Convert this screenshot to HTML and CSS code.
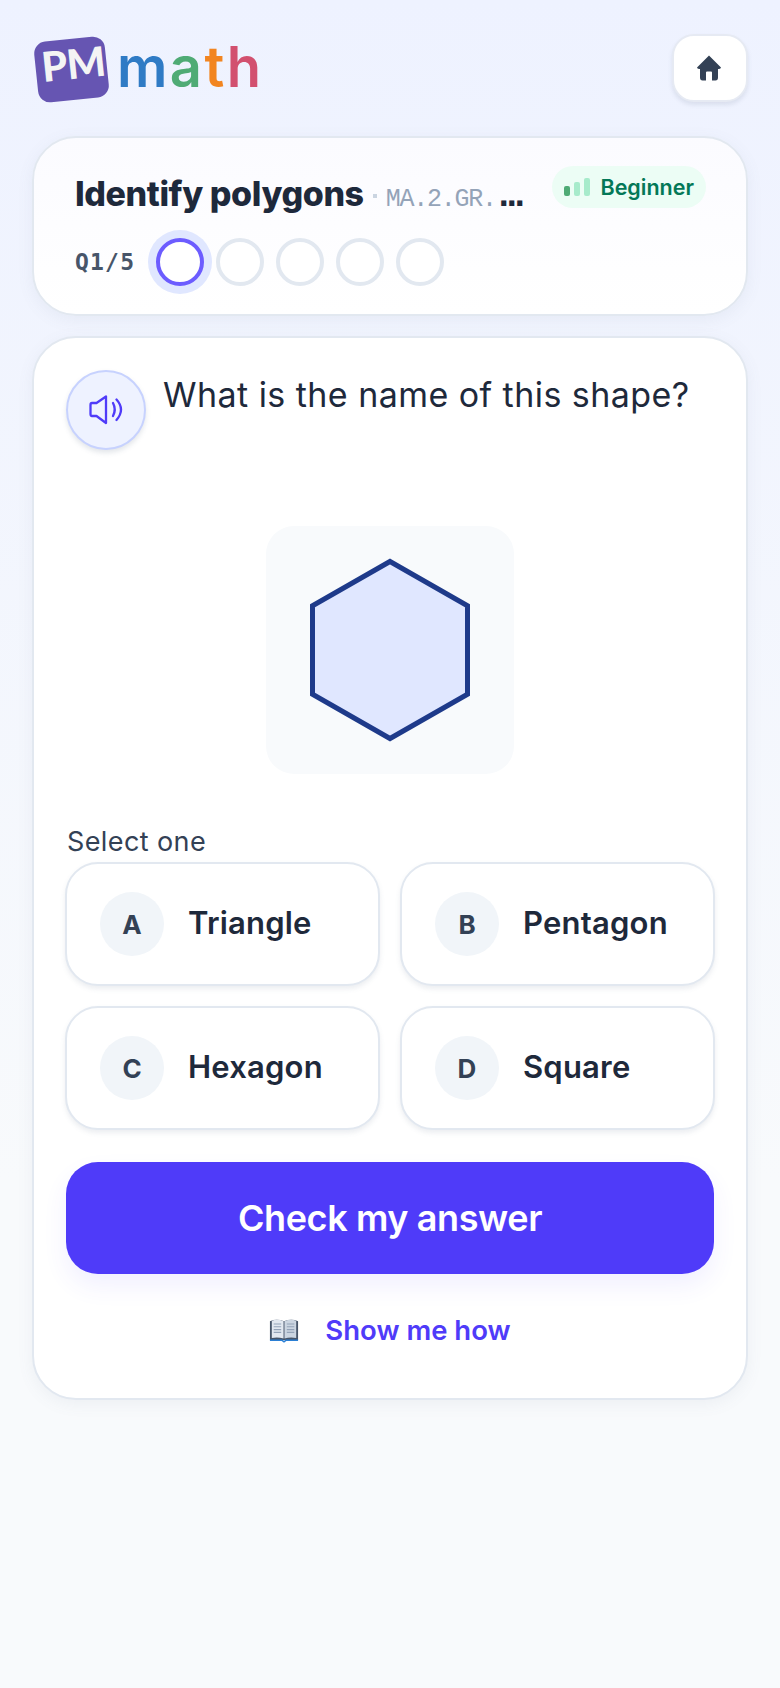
FILE: index.html
```html
<!DOCTYPE html>
<html lang="en">
<head>
    <meta charset="UTF-8">
    <meta name="viewport" content="width=device-width, initial-scale=1.0">
    <title>PM math</title>
    <link rel="stylesheet" href="styles.css">
</head>
<body>

    <!-- Header -->
    <div class="topbar">
        <div class="logo">
            <div class="logo-badge"><span>PM</span></div>
            <div class="logo-word"><span class="c-m">m</span><span class="c-a">a</span><span class="c-t">t</span><span class="c-h">h</span></div>
        </div>
        <button class="home-btn" aria-label="Home">
            <svg width="24" height="26" viewBox="0 0 24 26"><path d="M12 0.5 L24 12.6 Q23.8 14 22 14 H21 V22.5 Q21 25.5 18.5 25.5 H15 V17.5 Q15 16.5 14 16.5 H10 Q9 16.5 9 17.5 V25.5 H5.5 Q3 25.5 3 22.5 V14 H2 Q0.2 14 0 12.6 Z" fill="#334155"/></svg>
        </button>
    </div>

    <!-- Progress card -->
    <div class="card progress-card">
        <div class="title-row">
            <div class="title-line">
                <span class="title">Identify polygons</span>
                <span class="dot"></span>
                <span class="code">MA.2.GR.</span><span class="dots">...</span>
            </div>
            <div class="level">
                <span class="bars"><i></i><i></i><i></i></span>
                Beginner
            </div>
        </div>
        <div class="steps">
            <span class="step-label">Q1/5</span>
            <span class="step current"></span>
            <span class="step"></span>
            <span class="step"></span>
            <span class="step"></span>
            <span class="step"></span>
        </div>
    </div>

    <!-- Question card -->
    <div class="card question-card">
        <div class="question">
            <button class="speak-btn" aria-label="Read aloud">
                <svg width="34" height="30" viewBox="0 0 34 30" fill="none" stroke="#4f3bf9" stroke-width="2.3" stroke-linecap="round" stroke-linejoin="round">
                    <path d="M3 8 H7.5 L17 1.5 V28 L7.5 21 H3 Q1.5 21 1.5 19 V10 Q1.5 8 3 8 Z"/>
                    <path d="M24 8 Q27.5 14.5 24 21"/>
                    <path d="M27.5 4.5 Q36.5 14.5 27.5 25"/>
                </svg>
            </button>
            <p class="question-text">What is the name of this shape?</p>
        </div>

        <div class="shape-box">
            <svg width="160" height="184" viewBox="0 0 160 184">
                <polygon points="80,3.5 157.5,47.75 157.5,136.25 80,180.5 2.5,136.25 2.5,47.75" fill="#e0e7ff" stroke="#1e3a8a" stroke-width="5"/>
            </svg>
        </div>

        <div class="select-label">Select one</div>
        <div class="options">
            <div class="option"><span class="letter">A</span><span class="option-name">Triangle</span></div>
            <div class="option"><span class="letter">B</span><span class="option-name">Pentagon</span></div>
            <div class="option"><span class="letter">C</span><span class="option-name">Hexagon</span></div>
            <div class="option"><span class="letter">D</span><span class="option-name">Square</span></div>
        </div>

        <button class="check-btn">Check my answer</button>

        <div class="show-how">
            <svg width="30" height="25" viewBox="0 0 32 26">
                <path d="M1 3 Q8 0 16 3 Q24 0 31 3 V23 H1 Z" fill="#475569"/>
                <path d="M3 2.5 Q9 0.5 15.5 3 V21.5 Q9 19.5 3 21 Z" fill="#e2e8f0"/>
                <path d="M29 2.5 Q23 0.5 16.5 3 V21.5 Q23 19.5 29 21 Z" fill="#cbd5e1"/>
                <path d="M5 6 H13 M5 9 H13 M5 12 H13 M5 15 H13 M19 6 H27 M19 9 H27 M19 12 H27 M19 15 H27" stroke="#94a3b8" stroke-width="1.2"/>
                <path d="M1 23.5 H14 L16 25 L18 23.5 H31" fill="none" stroke="#2b7fd4" stroke-width="1.6"/>
            </svg>
            <a class="show-link" href="#">Show me how</a>
        </div>
    </div>

</body>
</html>
```

FILE: styles.css
```css
* {
    box-sizing: border-box;
}

body {
    font-family: 'Inter', 'Liberation Sans', sans-serif;
    margin: 0;
    padding: 36px 32px 0 32px;
    min-height: 1688px;
    background: linear-gradient(180deg, #eef2ff 0%, #f8fafc 70%);
    color: #1e293b;
}

button {
    font-family: inherit;
    cursor: pointer;
}

/* Header */
.topbar {
    display: flex;
    justify-content: space-between;
    align-items: flex-start;
    height: 100px;
}

.logo {
    display: flex;
    align-items: center;
    gap: 10px;
    height: 66px;
}

.logo-badge {
    width: 71px;
    height: 61px;
    margin-left: 4px;
    background-color: #6655b2;
    border-radius: 12px;
    transform: rotate(-6deg);
    padding: 0 0 0 6px;
    line-height: 50px;
}

.logo-badge span {
    color: #f4f4f4;
    font-family: 'Lato', sans-serif;
    font-size: 41px;
    font-weight: 900;
    letter-spacing: -0.5px;
}

.logo-word {
    font-size: 56px;
    font-weight: 600;
    letter-spacing: 2.4px;
    line-height: 1;
    margin-top: -5px;
}

.c-m { color: #2f7bc5; }
.c-a { color: #4fab75; }
.c-t { color: #f28520; }
.c-h { color: #d2506f; }

.home-btn {
    width: 76px;
    height: 68px;
    border: 2px solid #e6eaf3;
    margin-top: -2px;
    border-radius: 22px;
    background-color: #ffffff;
    box-shadow: 0 3px 4px rgba(100, 116, 139, 0.15);
    display: flex;
    align-items: center;
    justify-content: center;
    padding: 0 3px 0 0;
}

/* Cards */
.card {
    width: 716px;
    border: 2px solid #e2e8f0;
    border-radius: 44px;
    background-color: #ffffff;
    box-shadow: 0 4px 16px rgba(100, 116, 139, 0.08);
}

/* Progress card */
.progress-card {
    height: 180px;
    padding: 28px 41px 0 41px;
    background: linear-gradient(180deg, #fbfbff 0%, #ffffff 100%);
    margin-bottom: 20px;
}

.title-row {
    display: flex;
    justify-content: space-between;
    align-items: flex-start;
}

.title-line {
    display: flex;
    align-items: baseline;
    padding-top: 7px;
}

.title {
    font-size: 34px;
    font-weight: 800;
    letter-spacing: -0.4px;
    color: #1e293b;
}

.dot {
    width: 4px;
    height: 4px;
    margin: 0 9px 0 9px;
    background-color: #cbd5e1;
    position: relative;
    top: -8px;
}

.code {
    font-family: 'Liberation Mono', monospace;
    font-size: 25px;
    color: #94a3b8;
    letter-spacing: -1.25px;
}

.dots {
    font-family: 'Liberation Sans', sans-serif;
    font-size: 36px;
    font-weight: 700;
    line-height: 1;
    letter-spacing: -2px;
    color: #1e293b;
    margin-left: 3px;
}

.level {
    display: flex;
    align-items: center;
    gap: 10px;
    height: 42px;
    padding: 0 12px;
    border-radius: 21px;
    background-color: #ecfdf5;
    color: #047857;
    font-size: 21.5px;
    font-weight: 600;
    margin-right: -1px;
}

.bars {
    display: flex;
    align-items: flex-end;
    gap: 4px;
    height: 18px;
}

.bars i {
    width: 6px;
    background-color: #a7ebcb;
    border-radius: 2px;
    height: 18px;
}

.bars i:nth-child(1) { height: 10px; background-color: #4fab75; }
.bars i:nth-child(2) { height: 14px; }

.steps {
    display: flex;
    align-items: center;
    gap: 12px;
    margin-top: 24px;
}

.step-label {
    font-family: 'DejaVu Sans Mono', monospace;
    font-size: 23px;
    font-weight: 700;
    letter-spacing: 1.2px;
    color: #475569;
    width: 69px;
}

.step {
    width: 48px;
    height: 48px;
    border: 4px solid #e2e8f0;
    border-radius: 50%;
    background-color: #ffffff;
}

.step.current {
    border-color: #6c5cff;
    box-shadow: 0 0 0 8px #e0e7ff;
}

/* Question card */
.question-card {
    height: 1064px;
    padding: 33px 32px 0 32px;
}

.question {
    display: flex;
    gap: 17px;
    height: 155px;
}

.speak-btn {
    width: 80px;
    height: 80px;
    flex-shrink: 0;
    margin-top: -1px;
    border: 2px solid #c7d2fe;
    border-radius: 50%;
    background-color: #eef2ff;
    box-shadow: 0 3px 5px rgba(100, 116, 139, 0.18);
    display: flex;
    align-items: center;
    justify-content: center;
    padding: 0;
}

.question-text {
    margin: 0;
    padding-top: 2px;
    font-size: 34px;
    font-weight: 400;
    letter-spacing: 0.45px;
    line-height: 44px;
    color: #1e293b;
}

.shape-box {
    width: 248px;
    height: 248px;
    margin: 0 auto;
    border-radius: 28px;
    background-color: #f8fafc;
    display: flex;
    align-items: center;
    justify-content: center;
}

.select-label {
    margin-top: 52px;
    padding-left: 1px;
    font-size: 27px;
    letter-spacing: 0.4px;
    line-height: 32px;
    color: #334155;
}

.options {
    display: grid;
    grid-template-columns: 1fr 1fr;
    gap: 20px;
    margin: 4px -1px 0 -1px;
}

.option {
    height: 124px;
    border: 2px solid #e2e8f0;
    border-radius: 33px;
    background-color: #ffffff;
    box-shadow: 0 3px 5px rgba(100, 116, 139, 0.12);
    display: flex;
    align-items: center;
    gap: 24px;
    padding-left: 33px;
}

.letter {
    width: 64px;
    height: 64px;
    border-radius: 50%;
    background-color: #f1f5f9;
    color: #334155;
    font-size: 26px;
    font-weight: 700;
    display: flex;
    align-items: center;
    justify-content: center;
}

.option-name {
    font-size: 31px;
    font-weight: 600;
    letter-spacing: 0.2px;
    padding-bottom: 3px;
    color: #1e293b;
}

.check-btn {
    display: block;
    width: 100%;
    height: 112px;
    margin-top: 32px;
    border: none;
    border-radius: 32px;
    background-color: #4f3bf9;
    color: #ffffff;
    font-size: 36px;
    font-weight: 600;
    letter-spacing: -0.4px;
    box-shadow: 0 12px 24px rgba(79, 59, 249, 0.08);
}

.show-how {
    display: flex;
    justify-content: center;
    align-items: center;
    gap: 26px;
    margin-top: 39px;
}

.show-link {
    color: #4f3bf9;
    font-size: 27.5px;
    font-weight: 600;
    text-decoration: none;
}
```
